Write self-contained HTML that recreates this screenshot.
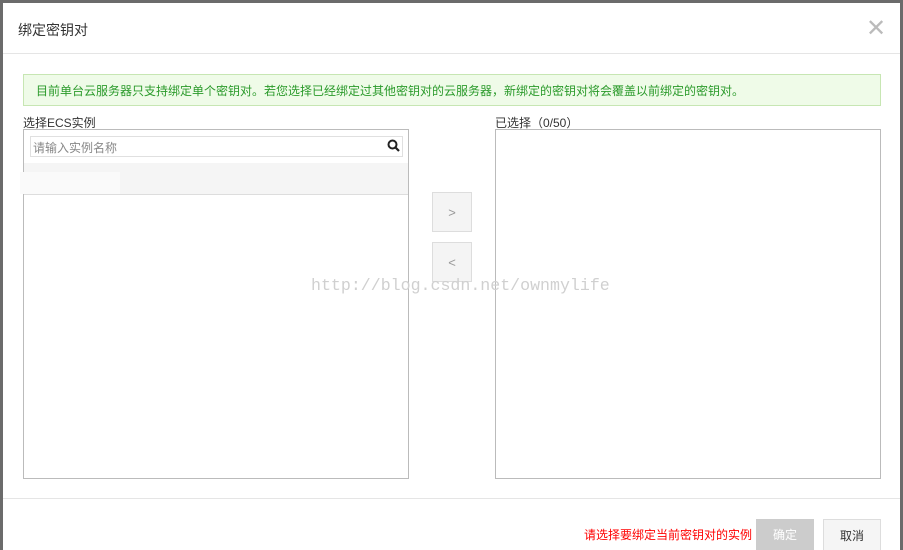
<!DOCTYPE html>
<html><head><meta charset="utf-8"><style>
html,body{margin:0;width:903px;height:550px;overflow:hidden}
body{background:#6b6b6b;font-family:"Liberation Sans","Noto Sans CJK SC",sans-serif;position:relative}
.d{position:absolute;left:3px;top:3px;width:897px;height:560px;background:#fff}
.a{position:absolute}
</style></head><body>
<div class="d"></div>
<div class="a" style="left:18px;top:20px;font-size:14px;color:#333">绑定密钥对</div>
<div class="a" style="left:866px;top:14px;font-size:24px;color:#bbb;font-weight:300">✕</div>
<div class="a" style="left:3px;top:53px;width:897px;height:1px;background:#e5e5e5"></div>
<div class="a" style="left:23px;top:74px;width:856px;height:30px;background:#effbe8;border:1px solid #c7e6b3"></div>
<div class="a" style="left:36px;top:82px;font-size:12px;color:#2a9a2a;white-space:nowrap">目前单台云服务器只支持绑定单个密钥对。若您选择已经绑定过其他密钥对的云服务器，新绑定的密钥对将会覆盖以前绑定的密钥对。</div>
<div class="a" style="left:23px;top:114px;font-size:12px;color:#333">选择ECS实例</div>
<div class="a" style="left:495px;top:114px;font-size:12px;color:#333">已选择（0/50）</div>
<div class="a" style="left:23px;top:129px;width:384px;height:348px;border:1px solid #bbb"></div>
<div class="a" style="left:30px;top:136px;width:371px;height:19px;border:1px solid #e0e0e0"></div>
<div class="a" style="left:33px;top:139px;font-size:12px;color:#888">请输入实例名称</div>
<svg class="a" style="left:387px;top:139px" width="13" height="13"><circle cx="5.5" cy="5.5" r="4" fill="none" stroke="#222" stroke-width="2"/><line x1="8.5" y1="8.5" x2="12" y2="12" stroke="#222" stroke-width="2.2"/></svg>
<div class="a" style="left:24px;top:163px;width:384px;height:31px;background:#f5f5f5;border-bottom:1px solid #ddd"></div>
<div class="a" style="left:20px;top:172px;width:100px;height:22px;background:#fafafa"></div>
<div class="a" style="left:432px;top:192px;width:38px;height:38px;border:1px solid #ddd;background:#f4f4f4;color:#999;font-size:13px;text-align:center;line-height:40px">&gt;</div>
<div class="a" style="left:432px;top:242px;width:38px;height:38px;border:1px solid #ddd;background:#f4f4f4;color:#999;font-size:13px;text-align:center;line-height:40px">&lt;</div>
<div class="a" style="left:495px;top:129px;width:384px;height:348px;border:1px solid #bbb"></div>
<div class="a" style="left:311px;top:276px;font-family:'Liberation Mono',monospace;font-size:16.6px;color:#d0d0d0">http://blog.csdn.net/ownmylife</div>
<div class="a" style="left:3px;top:498px;width:897px;height:1px;background:#e5e5e5"></div>
<div class="a" style="left:584px;top:526px;font-size:12px;color:#f00">请选择要绑定当前密钥对的实例</div>
<div class="a" style="left:756px;top:519px;width:58px;height:31px;background:#ccc;color:#fff;font-size:12px;text-align:center;line-height:33px">确定</div>
<div class="a" style="left:823px;top:519px;width:56px;height:31px;border:1px solid #ddd;background:#f5f5f5;color:#333;font-size:12px;text-align:center;line-height:33px">取消</div>
</body></html>
